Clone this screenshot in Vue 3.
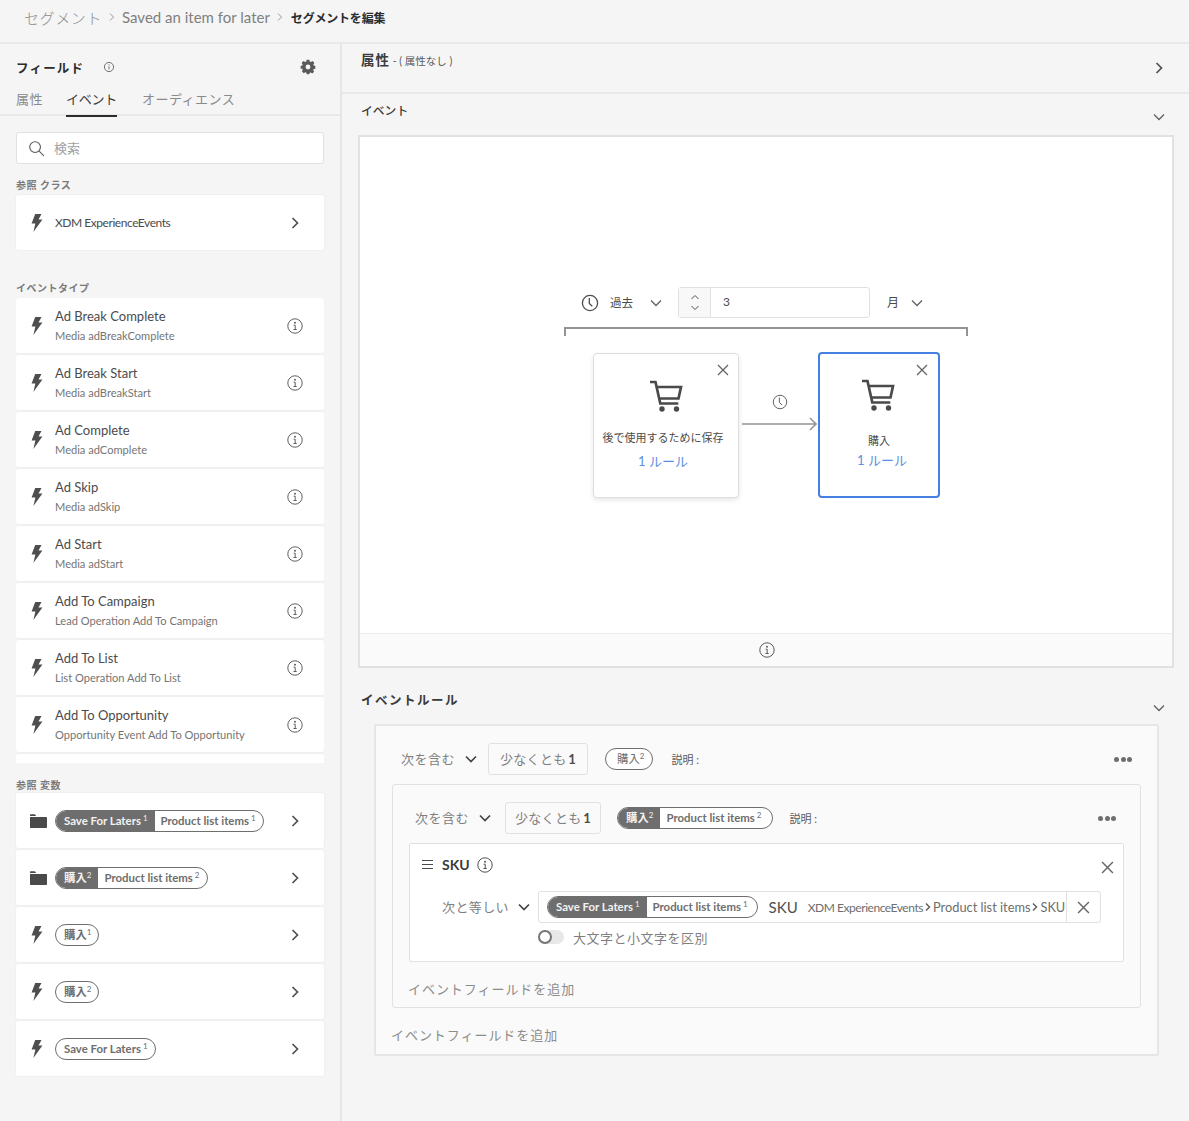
<template>
  <div class="page">
    <header class="crumbs">
      <span class="crumb-first">セグメント</span>
      <svg class="crumb-sep" viewBox="0 0 10 10"><path d="M3 1.5 6.5 5 3 8.5" /></svg>
      <span class="crumb-second">Saved an item for later</span>
      <svg class="crumb-sep" viewBox="0 0 10 10"><path d="M3 1.5 6.5 5 3 8.5" /></svg>
      <span class="crumb-last">セグメントを編集</span>
    </header>

    <div class="body">
      <aside class="side">
        <div class="side-head">
          <div class="side-title">
            <strong>フィールド</strong>
            <svg class="small-info" viewBox="0 0 12 12"><circle cx="6" cy="6" r="4.6" /><path d="M6 5.4v3M6 3.4v1" /></svg>
          </div>
          <svg class="gear" viewBox="0 0 24 24"><path d="M10 2h4l.6 2.8 1.7.7L18.700 4 21.500 6.800 20 9.200l.7 1.700L23 11.500v4l-2.500.6-.6 1.600 1.300 2.300-2.800 2.800-2.300-1.400-1.700.7L13.800 24h-3.600l-.6-2.400-1.700-.7-2.300 1.400-2.800-2.800 1.300-2.300-.6-1.600L1 15.500v-4l2.300-.6.700-1.700L2.500 6.800 5.300 4l2.400 1.500 1.700-.7Z" transform="translate(0 -1)" /><circle cx="12" cy="12" r="3.600" fill="#f5f5f5" /></svg>
        </div>
        <nav class="tabs">
          <span>属性</span>
          <span class="tab-on">イベント</span>
          <span>オーディエンス</span>
        </nav>

        <div class="side-body">
          <div class="search">
            <svg viewBox="0 0 18 18"><circle cx="7.500" cy="7.500" r="5.700" /><path d="m11.800 11.800 5 5" /></svg>
            <span>検索</span>
          </div>

          <div class="label first-label">参照 クラス</div>
          <div class="row">
            <svg class="bolt" viewBox="0 0 14 20"><path d="M5 0h7L8.700 6H13L3 20l2.200-9.500H1Z" /></svg>
            <span class="class-name">XDM ExperienceEvents</span>
            <svg class="chev" viewBox="0 0 10 14"><path d="m2.500 2 5 5-5 5" /></svg>
          </div>

          <div class="label second-label">イベントタイプ</div>
          <div class="event-list">
            <div v-for="ev in events" :key="ev.name" class="row event-row">
              <svg class="bolt" viewBox="0 0 14 20"><path d="M5 0h7L8.700 6H13L3 20l2.200-9.500H1Z" /></svg>
              <div class="event-text">
                <span class="event-name">{{ ev.name }}</span>
                <span class="event-sub">{{ ev.sub }}</span>
              </div>
              <svg class="info" viewBox="0 0 16 16"><circle cx="8" cy="8" r="7.200" /><path d="M6.600 7.200H8.200V11.500M6.500 11.500h3.200" /><circle class="dot" cx="8" cy="4.700" r="1" /></svg>
            </div>
            <div class="row"></div>
          </div>

          <div class="label third-label">参照 変数</div>
          <div v-for="v in variables" :key="v.id" class="row var-row">
            <svg v-if="v.folder" class="folder" viewBox="0 0 17 14"><path d="M0 1.200C0 .6.400.2 1 .2h3.500c.5 0 .8.200 1 .7L6 2H0Zm0 1.800h16c.6 0 1 .4 1 1v9c0 .6-.4 1-1 1H1c-.6 0-1-.4-1-1Z" /></svg>
            <svg v-else class="bolt" viewBox="0 0 14 20"><path d="M5 0h7L8.700 6H13L3 20l2.200-9.500H1Z" /></svg>
            <span class="pill">
              <span v-if="v.dark" class="pill-dark">{{ v.dark }}<sup :class="{ tight: v.dark === '購入' }">{{ v.darkNum }}</sup></span>
              <span class="pill-light">{{ v.light }}<sup :class="{ tight: v.light === '購入' }">{{ v.lightNum }}</sup></span>
            </span>
            <svg class="chev" viewBox="0 0 10 14"><path d="m2.500 2 5 5-5 5" /></svg>
          </div>
        </div>
      </aside>

      <main class="main">
        <section class="attr-bar">
          <div class="attr-text"><strong>属性</strong> - ( 属性なし )</div>
          <svg class="chev main-chev" viewBox="0 0 10 14"><path d="m2.500 2 5 5-5 5" /></svg>
        </section>

        <section class="events-section">
          <div class="sec-head first-head">
            <span class="sec-title">イベント</span>
            <svg class="down" viewBox="0 0 14 10"><path d="m2 2.500 5 5 5-5" /></svg>
          </div>

          <div class="canvas">
            <div class="stage">
              <div class="time-row">
                <svg class="clock" viewBox="0 0 18 18"><circle cx="9" cy="9" r="7.600" /><path d="M8.300 4v5.500l3 2.800" /></svg>
                <span class="time-word">過去</span>
                <svg class="down time-down" viewBox="0 0 14 10"><path d="m2 2.500 5 5 5-5" /></svg>
                <div class="stepper">
                  <div class="step-btns">
                    <svg viewBox="0 0 10 6"><path d="m1.500 5 3.500-3.500L8.500 5" /></svg>
                    <svg viewBox="0 0 10 6"><path d="M1.500 1 5 4.500 8.500 1" /></svg>
                  </div>
                  <span class="step-val">3</span>
                </div>
                <span class="month">月</span>
                <svg class="down" viewBox="0 0 14 10"><path d="m2 2.500 5 5 5-5" /></svg>
              </div>

              <div class="bracket"></div>

              <div class="flow">
                <div class="node node-a">
                  <svg class="node-x" viewBox="0 0 12 12"><path d="m1 1 10 10M11 1 1 11" /></svg>
                  <svg class="cart" viewBox="0 0 34 34"><path class="cart-line" d="M1 2h5.500l4.800 21.500h18M8 7h24l-2.500 11.500H10" /><circle cx="13" cy="29" r="2.700" /><circle cx="27.500" cy="29" r="2.700" /></svg>
                  <div class="node-name">後で使用するために保存</div>
                  <div class="node-rule">1 ルール</div>
                </div>
                <div class="link">
                  <svg class="clock link-clock" viewBox="0 0 18 18"><circle cx="9" cy="9" r="7.600" /><path d="M8.300 4v5.500l3 2.800" /></svg>
                  <svg class="arrow" viewBox="0 0 76 14"><path d="M0 7h74M68 1l6 6-6 6" /></svg>
                </div>
                <div class="node node-b">
                  <svg class="node-x" viewBox="0 0 12 12"><path d="m1 1 10 10M11 1 1 11" /></svg>
                  <svg class="cart" viewBox="0 0 34 34"><path class="cart-line" d="M1 2h5.500l4.800 21.500h18M8 7h24l-2.500 11.500H10" /><circle cx="13" cy="29" r="2.700" /><circle cx="27.500" cy="29" r="2.700" /></svg>
                  <div class="node-name">購入</div>
                  <div class="node-rule">1 ルール</div>
                </div>
              </div>
            </div>
            <div class="canvas-foot">
              <svg class="info foot-info" viewBox="0 0 16 16"><circle cx="8" cy="8" r="7.200" /><path d="M6.600 7.200H8.200V11.500M6.500 11.500h3.200" /><circle class="dot" cx="8" cy="4.700" r="1" /></svg>
            </div>
          </div>

          <div class="sec-head rule-head">
            <span class="sec-title rule-title">イベントルール</span>
            <svg class="down" viewBox="0 0 14 10"><path d="m2 2.500 5 5 5-5" /></svg>
          </div>

          <div class="rule-box">
            <div class="rule-row">
              <span class="select-word">次を含む</span>
              <svg class="down dark-down" viewBox="0 0 14 10"><path d="m2 2.500 5 5 5-5" /></svg>
              <span class="least">少なくとも <b>1</b></span>
              <span class="pill small-pill">
                <span class="pill-light">購入<sup class="tight">2</sup></span>
              </span>
              <span class="desc">説明 :</span>
              <span class="dots"><i></i><i></i><i></i></span>
            </div>

            <div class="inner-box">
              <div class="rule-row inner-row">
                <span class="select-word">次を含む</span>
                <svg class="down dark-down" viewBox="0 0 14 10"><path d="m2 2.500 5 5 5-5" /></svg>
                <span class="least">少なくとも <b>1</b></span>
                <span class="pill">
                  <span class="pill-dark">購入<sup class="tight">2</sup></span>
                  <span class="pill-light">Product list items<sup>2</sup></span>
                </span>
                <span class="desc">説明 :</span>
                <span class="dots"><i></i><i></i><i></i></span>
              </div>

              <div class="sku-card">
                <div class="sku-head">
                  <span class="burger"><i></i><i></i><i></i></span>
                  <strong class="sku-name">SKU</strong>
                  <svg class="info sku-info" viewBox="0 0 16 16"><circle cx="8" cy="8" r="7.200" /><path d="M6.600 7.200H8.200V11.500M6.500 11.500h3.200" /><circle class="dot" cx="8" cy="4.700" r="1" /></svg>
                  <svg class="node-x sku-x" viewBox="0 0 12 12"><path d="m1 1 10 10M11 1 1 11" /></svg>
                </div>
                <div class="sku-row">
                  <span class="select-word equal">次と等しい</span>
                  <svg class="down dark-down" viewBox="0 0 14 10"><path d="m2 2.500 5 5 5-5" /></svg>
                  <div class="value-box">
                    <div class="value-main">
                      <span class="pill">
                        <span class="pill-dark">Save For Laters<sup>1</sup></span>
                        <span class="pill-light">Product list items<sup>1</sup></span>
                      </span>
                      <span class="value-sku">SKU</span>
                      <span class="value-path">
                        <small>XDM ExperienceEvents</small>
                        <svg viewBox="0 0 6 10"><path d="m1 1.500 3.500 3.500L1 8.500" /></svg>
                        <span>Product list items</span>
                        <svg viewBox="0 0 6 10"><path d="m1 1.500 3.500 3.500L1 8.500" /></svg>
                        <span>SKU</span>
                      </span>
                    </div>
                    <div class="value-x">
                      <svg class="node-x" viewBox="0 0 12 12"><path d="m1 1 10 10M11 1 1 11" /></svg>
                    </div>
                  </div>
                </div>
                <div class="case-row">
                  <span class="toggle"><i></i></span>
                  <span>大文字と小文字を区別</span>
                </div>
              </div>

              <div class="add-field">イベントフィールドを追加</div>
            </div>

            <div class="add-field">イベントフィールドを追加</div>
          </div>
        </section>
      </main>
    </div>
  </div>
</template>

<script setup>
const events = [
  { name: 'Ad Break Complete', sub: 'Media adBreakComplete' },
  { name: 'Ad Break Start', sub: 'Media adBreakStart' },
  { name: 'Ad Complete', sub: 'Media adComplete' },
  { name: 'Ad Skip', sub: 'Media adSkip' },
  { name: 'Ad Start', sub: 'Media adStart' },
  { name: 'Add To Campaign', sub: 'Lead Operation Add To Campaign' },
  { name: 'Add To List', sub: 'List Operation Add To List' },
  { name: 'Add To Opportunity', sub: 'Opportunity Event Add To Opportunity' }
]

const variables = [
  { id: 1, folder: true, dark: 'Save For Laters', darkNum: 1, light: 'Product list items', lightNum: 1 },
  { id: 2, folder: true, dark: '購入', darkNum: 2, light: 'Product list items', lightNum: 2 },
  { id: 3, light: '購入', lightNum: 1 },
  { id: 4, light: '購入', lightNum: 2 },
  { id: 5, light: 'Save For Laters', lightNum: 1 }
]
</script>

<style>
html, body {
  margin: 0;
  background: #f5f5f5;
}
</style>

<style scoped>
.page {
  width: 1189px;
  height: 1121px;
  overflow: hidden;
  background: #f5f5f5;
  color: #4b4b4b;
  font-family: Lato, "Noto Sans CJK JP", sans-serif;
  font-size: 13px;
}

svg {
  display: block;
  flex: none;
  fill: none;
  stroke: #505050;
}

.crumbs {
  height: 34px;
  padding: 0 0 8px 24px;
  border-bottom: 2px solid #e8e8e8;
  display: flex;
  align-items: center;
}

.crumb-first {
  font-size: 15px;
  letter-spacing: 0.6px;
  color: #8c8c8c;
  font-weight: 300;
}

.crumb-second {
  font-size: 15px;
  color: #808080;
}

.crumb-last {
  font-size: 12px;
  font-weight: 700;
  color: #2c2c2c;
  letter-spacing: -0.2px;
  margin-left: 1px;
}

.crumb-sep {
  width: 10px;
  height: 10px;
  margin: 0 5px;
  stroke: #9a9a9a;
}

.body {
  display: flex;
  height: 1077px;
}

.side {
  width: 340px;
  flex: none;
  border-right: 2px solid #e6e6e6;
}

.side-head {
  height: 46px;
  padding: 0 24px 0 16px;
  display: flex;
  align-items: center;
  justify-content: space-between;
}

.side-title {
  display: flex;
  align-items: center;
}

.side-title strong {
  font-size: 12.500px;
  letter-spacing: 1.200px;
  color: #2c2c2c;
}

.small-info {
  width: 12px;
  height: 12px;
  margin-left: 19px;
  stroke: #707070;
}

.gear {
  width: 16px;
  height: 16px;
  fill: #5a5a5a;
  stroke: none;
}

.gear circle {
  stroke: none;
}

.tabs {
  height: 24px;
  padding: 0 0 0 16px;
  display: flex;
  gap: 23px;
  border-bottom: 2px solid #e8e8e8;
  color: #8a8a8a;
  font-size: 13px;
  letter-spacing: 0.450px;
  line-height: 19px;
}

.tab-on {
  height: 25px;
  border-bottom: 2px solid #2c2c2c;
  color: #3a3a3a;
  letter-spacing: -0.200px;
  margin-right: 2px;
}

.side-body {
  padding: 16px 16px 0;
}

.search {
  height: 30px;
  background: #fff;
  border: 1px solid #e1e1e1;
  border-radius: 3px;
  display: flex;
  align-items: center;
  padding-left: 11px;
  color: #a0a0a0;
  gap: 9px;
}

.search span {
  padding-bottom: 2px;
}

.search svg {
  width: 17px;
  height: 17px;
  stroke: #5c5c5c;
  stroke-width: 1.200;
}

.label {
  height: 18px;
  line-height: 16px;
  font-size: 10px;
  font-weight: 700;
  letter-spacing: 0.500px;
  color: #7a7a7a;
}

.first-label {
  margin-top: 13px;
}

.second-label {
  margin-top: 30px;
}

.third-label {
  margin-top: 12px;
  line-height: 20px;
}

.row {
  height: 55px;
  margin-bottom: 2px;
  background: #fff;
  border-radius: 2px;
  display: flex;
  align-items: center;
  padding: 0 24px 0 14px;
  box-shadow: 0 0 0 0.500px #ececec;
}

.bolt {
  width: 14px;
  height: 18px;
  fill: #4e4e4e;
  stroke: none;
  margin-right: 11px;
}

.class-name {
  flex: 1;
  font-size: 12px;
  letter-spacing: -0.450px;
  color: #4b4b4b;
}

.chev {
  width: 10px;
  height: 14px;
  margin-left: auto;
  stroke: #505050;
  stroke-width: 1.700;
}

.event-list {
  height: 465px;
  overflow: hidden;
}

.event-row {
  padding-right: 21px;
}

.event-text {
  display: flex;
  flex-direction: column;
  gap: 3px;
}

.event-name {
  font-size: 13px;
  line-height: 17px;
  color: #4b4b4b;
}

.event-sub {
  font-size: 11.100px;
  line-height: 15px;
  color: #757575;
}

.info {
  width: 16px;
  height: 16px;
  margin-left: auto;
  stroke: #606060;
  stroke-width: 1;
}

.info .dot {
  fill: #606060;
  stroke: none;
}

.folder {
  width: 17px;
  height: 14px;
  fill: #4a4a4a;
  stroke: none;
  margin-right: 8px;
}

.pill {
  display: inline-flex;
  flex: none;
  height: 20px;
  border: 1px solid #6e6e6e;
  border-radius: 11px;
  overflow: hidden;
  background: #fff;
  font-size: 11.400px;
  font-weight: 700;
  line-height: 20px;
  white-space: nowrap;
}

.pill sup {
  font-size: 8px;
  font-weight: 400;
  line-height: 0;
  margin-left: 2px;
  vertical-align: 4px;
}

.pill sup.tight {
  margin-left: 0;
}

.pill-dark {
  background: #6e6e6e;
  color: #f2f2f2;
  padding: 0 7px 0 8px;
}

.pill-light {
  color: #6e6e6e;
  padding: 0 7px 0 6px;
}

.var-row .pill-light:only-child {
  padding-left: 8px;
}

.main {
  flex: 1;
  min-width: 0;
}

.attr-bar {
  height: 48px;
  border-bottom: 2px solid #e8e8e8;
  padding: 0 25px 0 19px;
  display: flex;
  align-items: flex-start;
  justify-content: space-between;
}

.attr-text {
  margin-top: 6px;
  font-size: 10.500px;
  line-height: 20px;
  color: #5a5a5a;
}

.attr-text strong {
  font-size: 13.500px;
  color: #3c3c3c;
  letter-spacing: 1px;
}

.main-chev {
  margin-top: 17px;
}

.events-section {
  padding: 0 15px 0 16px;
}

.sec-head {
  height: 40px;
  display: flex;
  align-items: flex-start;
  justify-content: space-between;
  padding: 0 8px 0 3px;
}

.first-head {
  height: 41px;
}

.sec-title {
  margin-top: 7px;
  line-height: 20px;
  font-size: 11.800px;
  font-weight: 500;
  color: #3a3a3a;
}

.rule-title {
  margin-top: 5px;
  font-weight: 700;
  letter-spacing: 1.500px;
  font-size: 12.500px;
}

.sec-head .down {
  margin-top: 18px;
}

.canvas {
  height: 529px;
  border: 2px solid #e1e1e1;
  background: #fff;
  display: flex;
  flex-direction: column;
}

.stage {
  flex: 1;
  display: flex;
  flex-direction: column;
  padding: 150px 0 0 204px;
}

.down {
  width: 14px;
  height: 10px;
  stroke: #606060;
  stroke-width: 1.300;
}

.dark-down {
  stroke: #444;
  stroke-width: 1.700;
}

.time-row {
  display: flex;
  align-items: center;
  height: 31px;
  padding-left: 17px;
  font-size: 11.500px;
}

.clock {
  width: 18px;
  height: 18px;
  stroke: #4e4e4e;
  stroke-width: 1.300;
}

.time-word {
  margin-left: 11px;
  padding-bottom: 2px;
}

.time-down {
  margin: 0 15px 0 16px;
}

.stepper {
  width: 190px;
  height: 29px;
  border: 1px solid #e1e1e1;
  border-radius: 3px;
  display: flex;
  align-items: stretch;
}

.step-btns {
  width: 31px;
  background: #f8f8f8;
  border-right: 1px solid #e1e1e1;
  display: flex;
  flex-direction: column;
  align-items: center;
  justify-content: center;
  gap: 5px;
}

.step-btns svg {
  width: 10px;
  height: 6px;
  stroke: #505050;
}

.step-val {
  line-height: 27px;
  margin-left: 12px;
  font-size: 12px;
}

.month {
  margin: 0 11px 0 17px;
  font-size: 12px;
  padding-bottom: 2px;
}

.bracket {
  width: 400px;
  height: 7px;
  margin-top: 9px;
  border: 2px solid #949494;
  border-bottom: none;
}

.flow {
  display: flex;
  margin: 16px 0 0 29px;
}

.node {
  position: relative;
  background: #fff;
  border-radius: 4px;
  box-sizing: border-box;
  text-align: center;
  font-size: 11px;
  color: #4b4b4b;
}

.node-a {
  width: 146px;
  margin-top: 1px;
  height: 145px;
  border: 1px solid #dedede;
  box-shadow: 0 2px 5px rgba(0, 0, 0, 0.1);
  padding-top: 26px;
}

.node-b {
  width: 122px;
  height: 146px;
  border: 2px solid #4580e0;
  padding-top: 25px;
}

.node-x {
  width: 12px;
  height: 12px;
  stroke: #646464;
  stroke-width: 1.300;
}

.node > .node-x {
  position: absolute;
  top: 10px;
  right: 10px;
}

.node-a > .node-x {
  right: 9px;
}

.cart {
  width: 34px;
  height: 34px;
  margin: 0 auto;
  fill: #4a4a4a;
  stroke: none;
}

.node-b .cart {
  margin-left: 41px;
}

.cart-line {
  fill: none;
  stroke: #4a4a4a;
  stroke-width: 2.700;
}

.node-name {
  margin-top: 16px;
  line-height: 16px;
}

.node-a .node-name,
.node-a .node-rule {
  padding-right: 6px;
}

.node-b .node-name {
  margin-top: 20px;
}

.node-rule {
  margin-top: 7px;
  font-size: 13px;
  line-height: 16px;
  color: #5b8fe0;
}

.node-b .node-rule {
  margin-top: 3px;
  padding-left: 6px;
}

.link {
  width: 77px;
  padding: 42px 0 0 2px;
  display: flex;
  flex-direction: column;
  align-items: center;
}

.link-clock {
  width: 16px;
  height: 16px;
  stroke: #5e5e5e;
  stroke-width: 1.100;
}

.arrow {
  width: 76px;
  height: 14px;
  margin-top: 7px;
  stroke: #949494;
  stroke-width: 1.600;
}

.canvas-foot {
  height: 33px;
  box-sizing: border-box;
  background: #fafafa;
  border-top: 1px solid #ececec;
  display: flex;
  align-items: center;
  justify-content: center;
}

.foot-info {
  margin: 0 0 0 1px;
  stroke: #5a5a5a;
}

.rule-head {
  margin-top: 18px;
  height: 38px;
}

.rule-head .down {
  margin-top: 17px;
}

.rule-box {
  margin-left: 16px;
  width: 785px;
  height: 332px;
  box-sizing: border-box;
  border: 2px solid #e6e6e6;
  background: #fafafa;
  padding: 17px 16px 0 16px;
  border-radius: 2px;
}

.rule-row {
  height: 32px;
  display: flex;
  align-items: center;
  padding-left: 9px;
  padding-right: 9px;
}

.select-word {
  font-size: 13px;
  letter-spacing: 0.500px;
  color: #808080;
  margin-right: 9px;
  padding-bottom: 2px;
}

.least {
  height: 30px;
  border: 1px solid #e1e1e1;
  border-radius: 3px;
  margin-left: 10px;
  padding: 0 11px;
  line-height: 30px;
  font-size: 13px;
  letter-spacing: 0.300px;
  color: #808080;
  background: #fafafa;
}

.least b {
  color: #4b4b4b;
  margin-left: -2px;
}

.rule-row .pill {
  margin-left: 16px;
}

.rule-row .small-pill {
  margin-left: 17px;
}

.small-pill .pill-light {
  padding: 0 8px 0 11px;
  font-weight: 400;
}

.desc {
  margin-left: 18px;
  font-size: 11px;
  color: #5a5a5a;
}

.dots {
  margin-left: auto;
  display: flex;
  gap: 1.500px;
}

.dots i {
  width: 5px;
  height: 5px;
  border-radius: 50%;
  background: #6e6e6e;
}

.inner-box {
  margin-top: 9px;
  height: 224px;
  box-sizing: border-box;
  border: 1px solid #e1e1e1;
  border-radius: 3px;
  background: #fafafa;
  padding: 17px 16px 0;
}

.inner-row {
  padding-left: 6px;
  padding-right: 8px;
}

.inner-row .least {
  margin-left: 13px;
  padding: 0 9px;
}

.inner-row .desc {
  margin-left: 17px;
}

.inner-row .pill-light {
  padding-right: 10px;
}

.sku-card {
  margin-top: 9px;
  height: 119px;
  box-sizing: border-box;
  background: #fff;
  border: 1px solid #e1e1e1;
  border-radius: 2px;
  padding: 0 0 0 12px;
}

.sku-head {
  height: 41px;
  padding: 0 9px 6px 0;
  display: flex;
  align-items: center;
}

.burger {
  display: flex;
  flex-direction: column;
  gap: 2.500px;
  margin-right: 9px;
}

.burger i {
  width: 11px;
  height: 1.300px;
  background: #4b4b4b;
}

.sku-name {
  font-size: 14px;
  color: #3c3c3c;
}

.sku-info {
  margin-left: 7px;
  stroke: #505050;
}

.sku-x {
  margin-left: auto;
  width: 13px;
  height: 13px;
  margin-top: 6px;
}

.sku-row {
  display: flex;
  align-items: center;
  height: 32px;
}

.equal {
  margin-left: 20px;
  margin-right: 8px;
  letter-spacing: 0.400px;
}

.value-box {
  margin-left: 7px;
  width: 563px;
  height: 32px;
  box-sizing: border-box;
  border: 1px solid #e1e1e1;
  border-radius: 3px;
  display: flex;
  overflow: hidden;
}

.value-main {
  flex: 1;
  min-width: 0;
  display: flex;
  align-items: center;
  padding-left: 8px;
  overflow: hidden;
  white-space: nowrap;
}

.value-main .pill-light {
  padding-right: 9px;
}

.value-sku {
  margin-left: 11px;
  font-size: 15px;
  color: #505050;
}

.value-path {
  margin-left: 10px;
  display: flex;
  align-items: center;
  gap: 2px;
  font-size: 12.800px;
  color: #6e6e6e;
}

.value-path small {
  font-size: 12px;
  letter-spacing: -0.450px;
}

.value-path svg {
  width: 6px;
  height: 10px;
  stroke: #5a5a5a;
  stroke-width: 1.400;
}

.value-x {
  width: 33px;
  flex: none;
  border-left: 1px solid #e1e1e1;
  display: flex;
  align-items: center;
  justify-content: center;
}

.value-x .node-x {
  width: 13px;
  height: 13px;
}

.case-row {
  display: flex;
  align-items: center;
  margin: 4px 0 0 116px;
  height: 20px;
  font-size: 13px;
  letter-spacing: 0.500px;
  color: #808080;
}

.toggle {
  position: relative;
  width: 26px;
  height: 14px;
  background: #e8e8e8;
  border-radius: 7px;
  margin-right: 9px;
}

.toggle i {
  position: absolute;
  left: 0;
  top: 0;
  width: 14px;
  height: 14px;
  box-sizing: border-box;
  background: #fff;
  border: 2px solid #757575;
  border-radius: 50%;
}

.add-field {
  font-size: 13px;
  letter-spacing: 0.950px;
  color: #8c8c8c;
  margin: 18px 0 0 -1px;
  line-height: 18px;
}
</style>
